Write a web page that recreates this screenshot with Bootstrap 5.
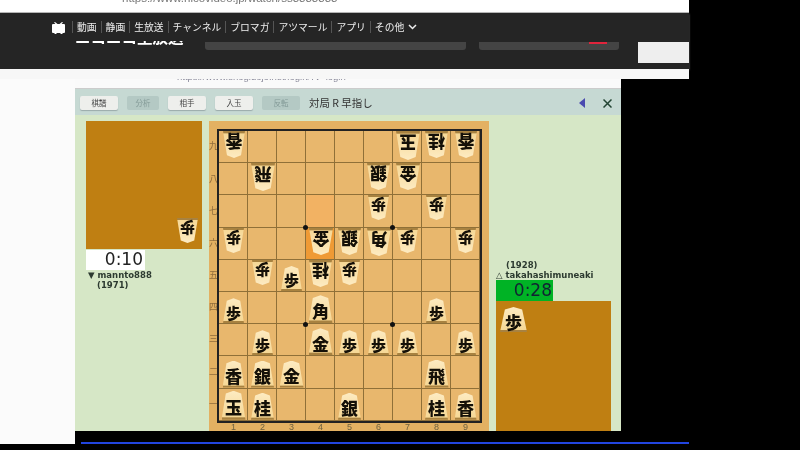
<!DOCTYPE html>
<html lang="ja"><head><meta charset="utf-8">
<link href="https://cdn.jsdelivr.net/npm/bootstrap@5.3.0/dist/css/bootstrap.min.css" rel="stylesheet">
<style>
html,body{margin:0;background:#000;overflow:hidden}
.stage{width:800px;height:450px;background:#000;overflow:hidden;font-family:"Noto Sans CJK JP","Noto Sans",sans-serif;filter:blur(.35px)}
.top-wrap{width:689px}
.chrome{height:13px;background:#fff;border-bottom:1px solid #bbb;overflow:hidden}
.chrome-url{font:11.500px/1 "Liberation Sans",sans-serif;color:#777;margin:-7px 0 0 122px;white-space:nowrap}
.dark-nav{height:56px;background:#252525;box-shadow:0 1px 2px #777}
.nav-row{height:28px;padding:0 0 0 52px;color:#eee;font-size:9.800px;line-height:12px}
.nav-row span{padding:0 4px;border-left:1px solid #555}
.tv{width:13px;height:13px;margin-right:7px}
.search-row{height:28px;align-items:flex-start}
.logo-clip{width:130px;margin-left:75px;height:4px;overflow:hidden;color:#fff;font-weight:700;font-size:15.500px;line-height:16px}
.logo-clip div{margin-top:-13px}
.field-a{width:261px;height:8px;background:#444;border-radius:0 0 3px 3px;margin-top:1px}
.field-b{width:140px;height:8px;background:#444;border-radius:0 0 3px 3px;margin:1px 0 0 13px;position:relative;overflow:hidden}
.field-b i{position:absolute;left:110px;top:0;width:18px;height:2px;background:#e0243c}
.white-ad{width:51px;height:21px;background:#eee;margin:1px 0 0 19px}
.strip{height:10px;background:#f7f7f7}
.side{width:75px;height:365px;background:#fbfbfb}
.main-col{width:614px}
.inner-strip{width:546px;height:10px;background:#fafafa;border-bottom:1px solid #ccc;overflow:hidden;white-space:nowrap;font:9.500px/1 "Liberation Sans",sans-serif;color:#889;padding-left:102px}
.inner-strip div{margin-top:-7px}
.app{width:546px;height:342px;background:#d6e7c6}
.tools{height:26px;background:#c6d9d3;padding:2px 0 0 5px;gap:9px}
.tool{width:38px;height:14px;padding:0;font-size:7.500px;line-height:14px;border:0;border-radius:2px;background:#eeefec;color:#444;box-shadow:0 1px 1px #9aa}
.tool.off{width:32px;background:#b4c9c4;color:#839a97;box-shadow:none}
.tool.off2{width:38px;background:#b4c9c4;color:#839a97;box-shadow:none}
.tools-title{font-size:10.500px;color:#333}
.tri{width:0;height:0;border:5px solid transparent;border-right:6px solid #4a4ab0;border-left:0;margin-left:auto}
.closex{width:9px;height:9px;margin:0 9px 0 9px}
.panes{height:316px}
.pane-l{width:134px;padding:6px 0 0 11px}
.stand-l{width:116px;height:128px;background:#bf7f12;padding:0 4px 6px 0;display:flex}
.clock-l{width:59px;height:20px;background:#fff;font:17px/19px "DejaVu Sans",sans-serif;color:#222;text-align:right;padding-right:2px;margin-top:1px;white-space:nowrap}
.who{font:bold 8.500px/10px "DejaVu Sans",sans-serif;color:#2c3a30;white-space:nowrap}
.who-l{padding-left:2px}
.who-y{padding-left:11px}
.who-z{padding-left:10px}
.board-frame{width:280px;height:310px;margin-top:6px;background:#e3b162;display:grid;grid-template-columns:9px 263px;grid-template-rows:9px 292px 9px}
.ranks{grid-row:2;grid-column:1;display:flex;flex-direction:column;font-size:9px}
.ranks div{height:32.200px;display:flex;align-items:center;justify-content:center;color:#8f6c3c}
.files{grid-row:3;grid-column:2;display:grid;grid-template-columns:repeat(9,29px);font:9px/10px "Liberation Sans",sans-serif;text-align:center;color:#6f6240;padding-left:1px}
.ban{grid-row:2;grid-column:2;position:relative;display:grid;grid-template-columns:repeat(9,29px);grid-template-rows:repeat(9,32.200px);border:1px solid #222;outline:1px solid #222;width:263px;height:292px;background-color:#e8b76d;background-image:repeating-linear-gradient(90deg,transparent 0 28px,#8f7038 28px 29px),repeating-linear-gradient(180deg,transparent 0 31.200px,#8f7038 31.200px 32.200px)}
.hl1{background:#f2b263;margin:0 1px 1px 0}
.hl2{background:#ef9a35;margin:0 1px 1px 0}
.star{position:absolute;width:5px;height:5px;background:#111;border-radius:50%}
.pc{display:flex;align-items:center;justify-content:center;justify-self:center;align-self:end;margin-bottom:1px;color:#141008;font-weight:900;font-size:17px;line-height:1;clip-path:polygon(50% 0,82% 10%,100% 100%,0 100%,18% 10%);background:linear-gradient(180deg,#fdebc2 0%,#f6d896 90%,#a88240 92%,#a88240 100%);padding-top:3px}
.rev{transform:rotate(180deg);align-self:start;margin:0}
.p{width:21px;height:25px;font-size:15px}
.l{width:22px;height:27px}
.n{width:23px;height:27px}
.s{width:23px;height:27px}
.g{width:24px;height:27px}
.b{width:24px;height:28px}
.k{width:24px;height:29px}
.hand-l{margin-left:auto;margin-top:auto;align-self:end}
.pane-r{width:127px;padding-left:7px}
.clock-r{width:57px;height:21px;background:#00b325;font:17px/21px "DejaVu Sans",sans-serif;color:#123;text-align:right;padding-right:1px}
.stand-r{width:115px;height:130px;background:#bf7f12;padding:6px 0 0 4px}
.stand-r .pc{width:27px;height:25px;justify-self:start;margin:0;font-size:17px}
.names-r{padding-top:145px}
.blue-line{height:2px;background:#2245e0;margin:11px 0 0 6px;width:608px}
</style></head>
<body>
<div class="stage">
 <div class="top-wrap">
  <div class="chrome"><div class="chrome-url">https://www.nicovideo.jp/watch/ss3333333</div></div>
  <div class="dark-nav">
   <div class="nav-row d-flex align-items-center">
    <svg class="tv" viewBox="0 0 13 13"><path d="M3 1l2.500 2h2L10 1l1 .6L9.500 3H12a1 1 0 0 1 1 1v7a1 1 0 0 1-1 1h-1.500v1h-2v-1h-4v1h-2v-1H1a1 1 0 0 1-1-1V4a1 1 0 0 1 1-1h2.500L2 1.600z" fill="#fff"/></svg>
    <span>動画</span><span>静画</span><span>生放送</span><span>チャンネル</span><span>ブロマガ</span><span>アツマール</span><span>アプリ</span><span>その他</span>
    <svg width="9" height="6" viewBox="0 0 9 6"><path d="M1 1l3.500 3.500L8 1" fill="none" stroke="#eee" stroke-width="1.500"/></svg>
   </div>
   <div class="search-row d-flex">
    <div class="logo-clip"><div>ニコニコ生放送</div></div>
    <div class="field-a"></div>
    <div class="field-b"><i></i></div>
    <div class="white-ad"></div>
   </div>
  </div>
  <div class="strip"></div>
 </div>
 <div class="d-flex">
  <div class="side"></div>
  <div class="main-col">
   <div class="inner-strip"><div>https://www.shogidojo.net/login/?v=login</div></div>
   <div class="app">
    <div class="tools d-flex align-items-center">
     <button class="btn tool">棋譜</button><button class="btn tool off">分析</button><button class="btn tool">相手</button><button class="btn tool">入玉</button><button class="btn tool off2">反転</button>
     <span class="tools-title">対局 R 早指し</span>
     <span class="tri"></span>
     <svg class="closex" viewBox="0 0 9 9"><path d="M.5.500l8 8M8.500.500l-8 8" stroke="#243" stroke-width="1.500"/></svg>
    </div>
    <div class="panes d-flex">
     <div class="pane-l">
      <div class="stand-l"><div class="pc p rev hand-l">歩</div></div>
      <div class="clock-l">0:10</div>
      <div class="who who-l">▼ mannto888</div>
      <div class="who who-y">(1971)</div>
     </div>
     <div class="board-frame">
      <div class="ranks"><div>九</div><div>八</div><div>七</div><div>六</div><div>五</div><div>四</div><div>三</div><div>二</div><div>一</div></div>
      <div class="ban">
       <div class="hl1" style="grid-area:3/4"></div><div class="hl2" style="grid-area:4/4"></div>
       <div class="pc l rev" style="grid-area:1/1">香</div><div class="pc k rev" style="grid-area:1/7">玉</div><div class="pc n rev" style="grid-area:1/8">桂</div><div class="pc l rev" style="grid-area:1/9">香</div>
       <div class="pc b rev" style="grid-area:2/2">飛</div><div class="pc s rev" style="grid-area:2/6">銀</div><div class="pc g rev" style="grid-area:2/7">金</div>
       <div class="pc p rev" style="grid-area:3/6">歩</div><div class="pc p rev" style="grid-area:3/8">歩</div>
       <div class="pc p rev" style="grid-area:4/1">歩</div><div class="pc g rev" style="grid-area:4/4">金</div><div class="pc s rev" style="grid-area:4/5">銀</div><div class="pc b rev" style="grid-area:4/6">角</div><div class="pc p rev" style="grid-area:4/7">歩</div><div class="pc p rev" style="grid-area:4/9">歩</div>
       <div class="pc p rev" style="grid-area:5/2">歩</div><div class="pc p" style="grid-area:5/3">歩</div><div class="pc n rev" style="grid-area:5/4">桂</div><div class="pc p rev" style="grid-area:5/5">歩</div>
       <div class="pc p" style="grid-area:6/1">歩</div><div class="pc b" style="grid-area:6/4">角</div><div class="pc p" style="grid-area:6/8">歩</div>
       <div class="pc p" style="grid-area:7/2">歩</div><div class="pc g" style="grid-area:7/4">金</div><div class="pc p" style="grid-area:7/5">歩</div><div class="pc p" style="grid-area:7/6">歩</div><div class="pc p" style="grid-area:7/7">歩</div><div class="pc p" style="grid-area:7/9">歩</div>
       <div class="pc l" style="grid-area:8/1">香</div><div class="pc s" style="grid-area:8/2">銀</div><div class="pc g" style="grid-area:8/3">金</div><div class="pc b" style="grid-area:8/8">飛</div>
       <div class="pc k" style="grid-area:9/1">玉</div><div class="pc n" style="grid-area:9/2">桂</div><div class="pc s" style="grid-area:9/5">銀</div><div class="pc n" style="grid-area:9/8">桂</div><div class="pc l" style="grid-area:9/9">香</div>
       <span class="star" style="left:84px;top:94px"></span><span class="star" style="left:171px;top:94px"></span><span class="star" style="left:84px;top:191px"></span><span class="star" style="left:171px;top:191px"></span>
      </div>
      <div class="files"><span>1</span><span>2</span><span>3</span><span>4</span><span>5</span><span>6</span><span>7</span><span>8</span><span>9</span></div>
     </div>
     <div class="pane-r">
      <div class="names-r">
       <div class="who who-z">(1928)</div>
       <div class="who">△ takahashimuneaki</div>
      </div>
      <div class="clock-r">0:28</div>
      <div class="stand-r"><div class="pc">歩</div></div>
     </div>
    </div>
   </div>
   <div class="blue-line"></div>
  </div>
 </div>
</div>
</body></html>
